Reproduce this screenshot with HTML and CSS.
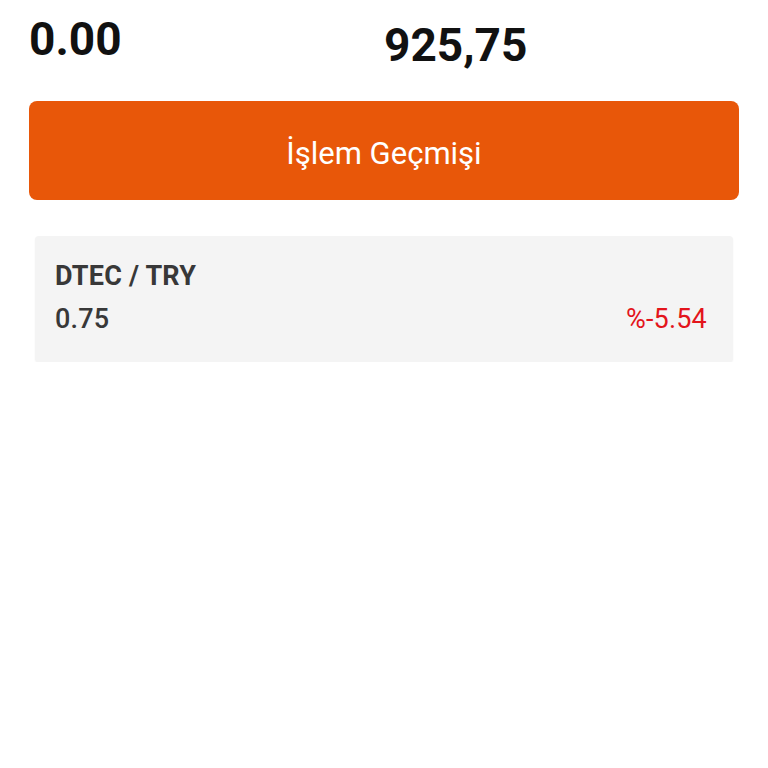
FILE: index.html
```html
<!DOCTYPE html>
<html lang="tr">
<head>
<meta charset="utf-8">
<title>DTEC / TRY</title>
<link rel="stylesheet" href="styles.css">
</head>
<body>
<div class="page">
  <div class="summary">
    <div class="summary-col">
      <div class="value">0.00</div>
    </div>
    <div class="summary-col summary-col--right">
      <div class="value">925,75</div>
    </div>
  </div>
  <button class="history-btn" type="button">İşlem Geçmişi</button>
  <div class="pair-card">
    <div class="pair-name">DTEC / TRY</div>
    <div class="pair-row">
      <span class="pair-price">0.75</span>
      <span class="pair-change">%-5.54</span>
    </div>
  </div>
</div>
</body>
</html>
```

FILE: styles.css
```css
html, body {
  margin: 0;
  padding: 0;
  background: #ffffff;
}

body {
  font-family: Roboto, "Noto Sans", "Liberation Sans", sans-serif;
  color: #333333;
}

.page {
  padding: 13px 29px 0 29px;
  display: flex;
  flex-direction: column;
}

.summary {
  display: grid;
  grid-template-columns: 1fr 1fr;
}

.summary-col--right {
  padding-top: 6px;
}

.value {
  font-size: 46px;
  line-height: 52px;
  font-weight: 700;
  color: #111111;
}

.history-btn {
  margin-top: 30px;
  height: 99px;
  width: 100%;
  border: none;
  border-radius: 8px;
  background: #e85709;
  color: #ffffff;
  font-family: Roboto, "Noto Sans", "Liberation Sans", sans-serif;
  font-size: 31px;
  font-weight: 400;
  padding: 5px 0 0 0;
  display: flex;
  align-items: center;
  justify-content: center;
}

.pair-card {
  margin: 36px 6px 0 6px;
  height: 126px;
  box-sizing: border-box;
  padding: 25px 26px 0 20px;
  background: #f4f4f4;
  border-radius: 4px;
  box-shadow: 0 1px 2px rgba(0, 0, 0, 0.05);
}

.pair-name {
  font-size: 27px;
  line-height: 30px;
  font-weight: 700;
  letter-spacing: 0.2px;
  color: #383838;
}

.pair-row {
  margin-top: 13px;
  display: flex;
  justify-content: space-between;
  align-items: baseline;
  font-size: 27px;
  line-height: 30px;
  letter-spacing: 0.2px;
}

.pair-price {
  font-weight: 500;
  color: #383838;
}

.pair-change {
  font-weight: 400;
  color: #e3141b;
}
```
